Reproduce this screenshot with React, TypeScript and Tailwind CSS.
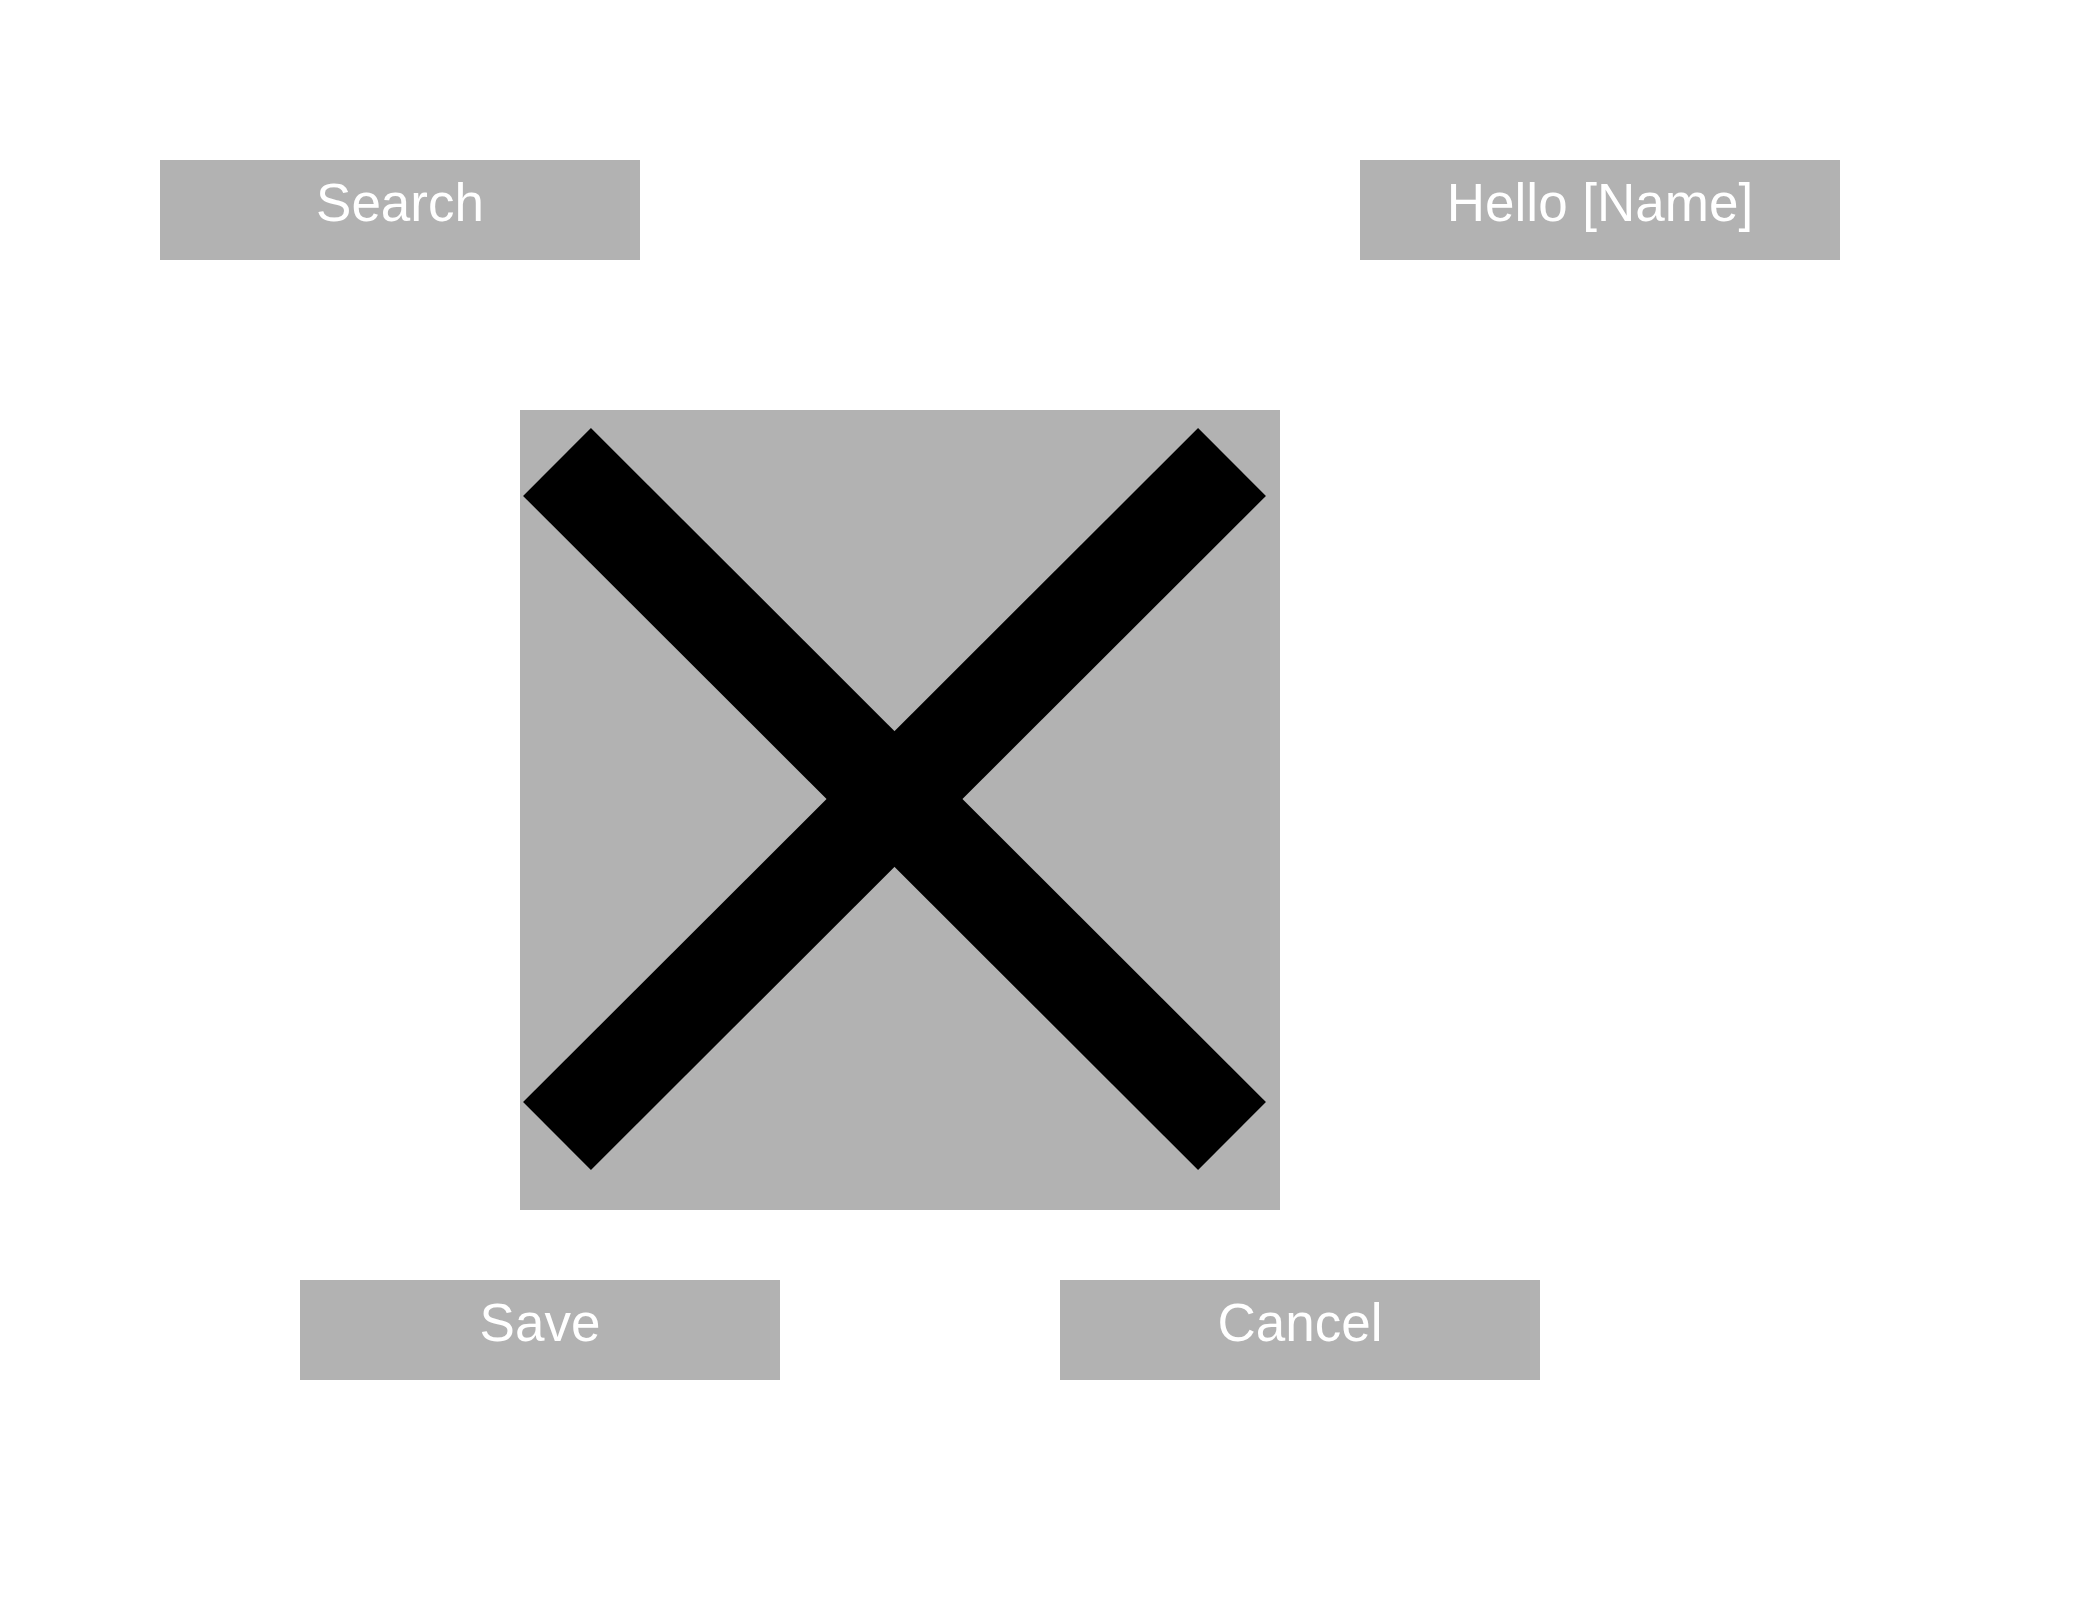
import React from 'react'

function Btn({ label }: { label: string }) {
  return (
    <div className="w-[480px] h-[100px] shrink-0 bg-[#b2b2b2] text-white text-center text-[53px] leading-[53px] pt-[16px]">
      {label}
    </div>
  )
}

export default function App() {
  return (
    <div className="w-[2080px] h-[1600px] bg-white pt-[160px] font-['Liberation_Sans',Arial,sans-serif]">
      <div className="flex pl-[160px] gap-[720px]">
        <Btn label="Search" />
        <Btn label="Hello [Name]" />
      </div>
      <div className="mt-[150px] ml-[520px] w-[760px] h-[800px] bg-[#b2b2b2]">
        <svg width="760" height="800" viewBox="0 0 760 800">
          <line x1="37" y1="52" x2="712" y2="726" stroke="#000" strokeWidth="96" />
          <line x1="712" y1="52" x2="37" y2="726" stroke="#000" strokeWidth="96" />
        </svg>
      </div>
      <div className="flex mt-[70px] pl-[300px] gap-[280px]">
        <Btn label="Save" />
        <Btn label="Cancel" />
      </div>
    </div>
  )
}
